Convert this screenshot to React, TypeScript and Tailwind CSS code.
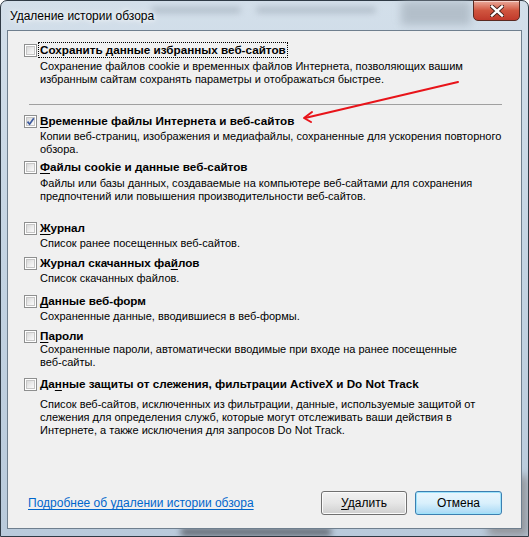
import React from "react";

const font = { fontFamily: '"Liberation Sans", Arial, sans-serif' };

function Check({ checked = false }: { checked?: boolean }) {
  return (
    <div className="relative w-[13px] h-[13px] shrink-0 border border-[#8e8f8f] bg-white">
      <div className="absolute inset-[1px] border border-[#c6c6c6] bg-gradient-to-br from-[#d8d8d8] via-[#ebebeb] to-[#fafafa]" />
      {checked && (
        <svg className="absolute left-[1px] top-[1px]" width="9" height="9" viewBox="0 0 9 9">
          <path d="M1.5 4.6 L3.6 7.2 L7.8 1.2" fill="none" stroke="#3d5a9e" strokeWidth="1.7" />
        </svg>
      )}
    </div>
  );
}

type Item = {
  label: React.ReactNode;
  desc: string[];
  checked?: boolean;
  mt: string;
  gap: string;
  focus?: boolean;
};

function U({ children }: { children: React.ReactNode }) {
  return <span className="underline underline-offset-[2px]">{children}</span>;
}

const items: Item[] = [
  {
    label: "Сохранить данные избранных веб-сайтов",
    desc: [
      "Сохранение файлов cookie и временных файлов Интернета, позволяющих вашим",
      "избранным сайтам сохранять параметры и отображаться быстрее.",
    ],
    mt: "mt-[12px]",
    gap: "mt-[3px]",
    focus: true,
  },
  {
    label: (
      <>
        <U>В</U>ременные файлы Интернета и веб-сайтов
      </>
    ),
    desc: [
      "Копии веб-страниц, изображения и медиафайлы, сохраненные для ускорения повторного",
      "обзора.",
    ],
    checked: true,
    mt: "mt-[9px]",
    gap: "mt-[2px]",
  },
  {
    label: (
      <>
        <U>Ф</U>айлы cookie и данные веб-сайтов
      </>
    ),
    desc: [
      "Файлы или базы данных, создаваемые на компьютере веб-сайтами для сохранения",
      "предпочтений или повышения производительности веб-сайтов.",
    ],
    mt: "mt-[4px]",
    gap: "mt-[3px]",
  },
  {
    label: (
      <>
        <U>Ж</U>урнал
      </>
    ),
    desc: ["Список ранее посещенных веб-сайтов."],
    mt: "mt-[18px]",
    gap: "mt-[2px]",
  },
  {
    label: (
      <>
        Журнал скачанных фа<U>й</U>лов
      </>
    ),
    desc: ["Список скачанных файлов."],
    mt: "mt-[6px]",
    gap: "mt-[2px]",
  },
  {
    label: (
      <>
        <U>Д</U>анные веб-форм
      </>
    ),
    desc: ["Сохраненные данные, вводившиеся в веб-формы."],
    mt: "mt-[9px]",
    gap: "mt-[2px]",
  },
  {
    label: (
      <>
        <U>П</U>ароли
      </>
    ),
    desc: [
      "Сохраненные пароли, автоматически вводимые при входе на ранее посещенные",
      "веб-сайты.",
    ],
    mt: "mt-[6px]",
    gap: "mt-[0px]",
  },
  {
    label: (
      <>
        Да<U>н</U>ные защиты от слежения, фильтрации ActiveX и Do Not Track
      </>
    ),
    desc: [
      "Список веб-сайтов, исключенных из фильтрации, данные, используемые защитой от",
      "слежения для определения служб, которые могут отслеживать ваши действия в",
      "Интернете, а также исключения для запросов Do Not Track.",
    ],
    mt: "mt-[8px]",
    gap: "mt-[7px]",
  },
];

function Entry({ item }: { item: Item }) {
  return (
    <div className={item.mt}>
      <div className="flex items-center h-[14px]">
        <Check checked={item.checked} />
        <span
          className={
            "ml-[2px] px-[1px] text-[11.7px] leading-[14px] font-bold text-black whitespace-nowrap " +
            (item.focus ? "outline outline-1 outline-dotted outline-black" : "")
          }
        >
          {item.label}
        </span>
      </div>
      <div className={"pl-[16px] " + item.gap}>
        {item.desc.map((d, i) => (
          <div key={i} className="text-[11px] leading-[13px] text-black whitespace-nowrap">
            {d}
          </div>
        ))}
      </div>
    </div>
  );
}

export default function App() {
  return (
    <div
      style={font}
      className="relative w-[529px] h-[537px] overflow-hidden bg-white"
    >
      {/* window frame */}
      <div className="relative h-full w-full rounded-t-[7px] border border-[#2f3a45] bg-gradient-to-b from-[#d3dfea] via-[#c3d3e2] to-[#b9cadb] flex flex-col">
        {/* blurred backdrop */}
        <div className="absolute left-[150px] top-[6px] w-[90px] h-[6px] rounded-full bg-[#9aa7b3] blur-[3px] opacity-60" />
        <div className="absolute left-[255px] top-[6px] w-[120px] h-[6px] rounded-full bg-[#9aa7b3] blur-[3px] opacity-60" />
        <div className="absolute left-[400px] top-[0px] w-[70px] h-[24px] bg-[#a6b2bd] blur-[4px] opacity-70" />
        <div className="absolute left-[180px] bottom-[0px] w-[150px] h-[8px] bg-[#2b2b30] blur-[3px] opacity-60" />
        <div className="absolute right-[0px] bottom-[0px] w-[40px] h-[60px] bg-[#5a4a40] blur-[4px] opacity-40" />

        {/* title bar */}
        <div className="relative h-[29px] flex items-start">
          <span
            className="ml-[9px] mt-[8px] text-[12px] leading-[14px] text-black"
            style={{ textShadow: "0 0 8px #ffffff, 0 0 4px #ffffff" }}
          >
            Удаление истории обзора
          </span>
          <div className="ml-auto mr-[8px] -mt-[1px] w-[47px] h-[21px] rounded-b-[5px] border border-[#5a2a22] bg-gradient-to-b from-[#e9a99b] via-[#d0553f] to-[#c0392b] flex items-center justify-center shadow-[inset_0_1px_0_rgba(255,255,255,0.5)]">
            <svg width="14" height="12" viewBox="0 0 14 12">
              <path d="M2 1.5 L12 10.5 M12 1.5 L2 10.5" stroke="#3b1c17" strokeWidth="4.2" strokeLinecap="square" />
              <path d="M2 1.5 L12 10.5 M12 1.5 L2 10.5" stroke="#ffffff" strokeWidth="2.4" strokeLinecap="square" />
            </svg>
          </div>
        </div>

        {/* client area */}
        <div className="relative mx-[6px] h-[499px] border border-[#6f7f8e] bg-[#f0f0f0] flex flex-col">
          <div className="pl-[16px] pr-[16px]">
            <Entry item={items[0]} />
            <div className="ml-[5px] mr-[3px] mt-[18px] h-px bg-[#a0a0a0]" />
            {items.slice(1).map((it, i) => (
              <Entry key={i} item={it} />
            ))}
          </div>

          {/* footer */}
          <div className="mt-auto mb-[13px] flex items-center pl-[20px] pr-[19px]">
            <a className="text-[12px] text-[#0066cc] underline underline-offset-[2px] cursor-pointer">
              Подробнее об удалении истории обзора
            </a>
            <button className="ml-auto w-[86px] h-[24px] rounded-[3px] border border-[#707070] bg-gradient-to-b from-[#f2f2f2] via-[#e6e6e6] to-[#cfcfcf] text-[12px] text-black shadow-[inset_0_0_0_1px_#fbfbfb]">
              <U>У</U>далить
            </button>
            <button className="ml-[8px] w-[87px] h-[24px] rounded-[3px] border border-[#3c7fb1] bg-gradient-to-b from-[#eaf6fd] via-[#d9f0fc] to-[#a7d9f5] text-[12px] text-black shadow-[inset_0_0_0_1px_#9de3fb]">
              Отмена
            </button>
          </div>
        </div>
      </div>

      {/* red annotation arrow */}
      <svg className="absolute left-0 top-0 pointer-events-none" width="529" height="537">
        <path d="M458 82 L305 118" stroke="#e8141a" strokeWidth="2" fill="none" strokeLinecap="round" />
        <path d="M312 112 L304 118 L311 122" stroke="#e8141a" strokeWidth="2" fill="none" strokeLinecap="round" strokeLinejoin="round" />
      </svg>
    </div>
  );
}
